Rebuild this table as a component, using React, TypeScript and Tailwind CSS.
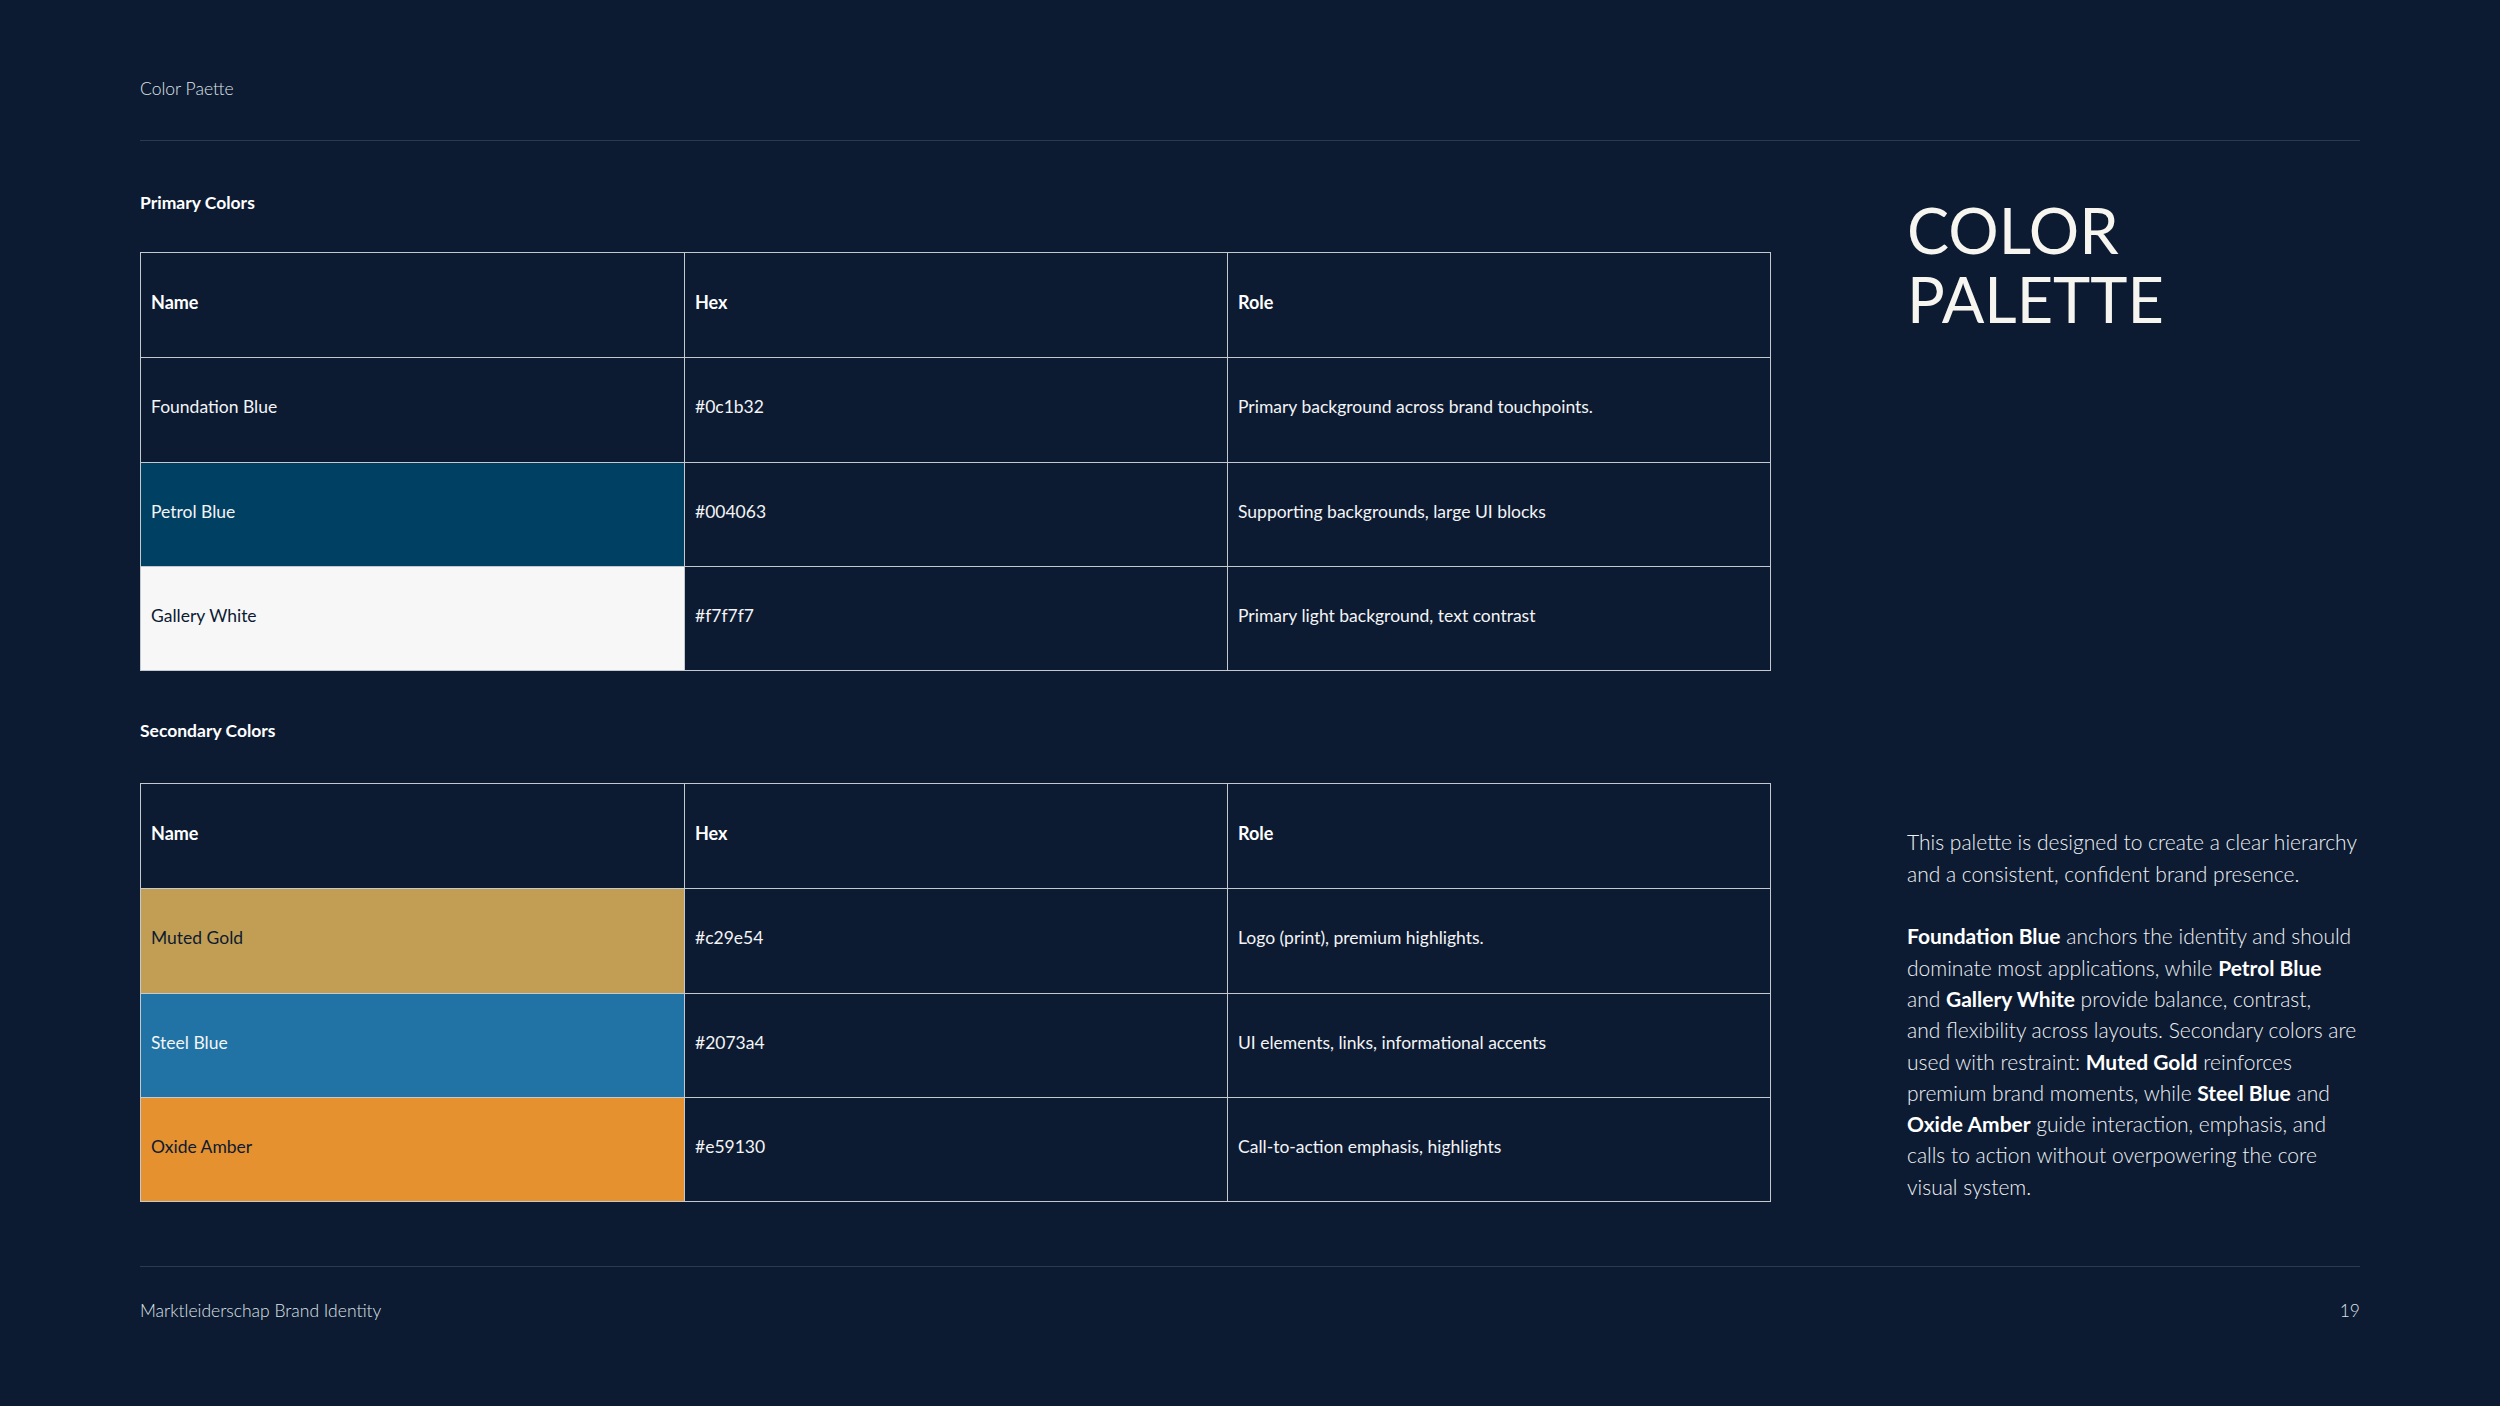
import React from "react"

type Swatch = {
  name: string
  hex: string
  role: string
  cell: string
}

const primary: Swatch[] = [
  { name: "Foundation Blue", hex: "#0c1b32", role: "Primary background across brand touchpoints.", cell: "bg-[#0c1b32] text-[#f3f4f6]" },
  { name: "Petrol Blue", hex: "#004063", role: "Supporting backgrounds, large UI blocks", cell: "bg-[#004063] text-[#f3f4f6]" },
  { name: "Gallery White", hex: "#f7f7f7", role: "Primary light background, text contrast", cell: "bg-[#f7f7f7] text-[#0c1b32]" },
]

const secondary: Swatch[] = [
  { name: "Muted Gold", hex: "#c29e54", role: "Logo (print), premium highlights.", cell: "bg-[#c29e54] text-[#0c1b32]" },
  { name: "Steel Blue", hex: "#2073a4", role: "UI elements, links, informational accents", cell: "bg-[#2073a4] text-[#f3f4f6]" },
  { name: "Oxide Amber", hex: "#e59130", role: "Call-to-action emphasis, highlights", cell: "bg-[#e59130] text-[#0c1b32]" },
]

const ColorTable = ({ rows }: { rows: Swatch[] }) => (
  <div className="border border-[#c4c8cf] text-[17.5px]">
    {/* Header */}
    <div className="grid grid-cols-3 h-[104.25px] text-[18px] font-bold text-white">
      <div className="flex items-center px-[10px] pb-[6px]">Name</div>
      <div className="flex items-center px-[10px] pb-[6px] border-l border-[#c4c8cf]">Hex</div>
      <div className="flex items-center px-[10px] pb-[6px] border-l border-[#c4c8cf]">Role</div>
    </div>
    {rows.map((row) => (
      <div key={row.name} className="grid grid-cols-3 h-[104.25px] border-t border-[#c4c8cf]">
        <div className={`flex items-center px-[10px] pb-[5px] ${row.cell}`}>{row.name}</div>
        <div className="flex items-center px-[10px] pb-[5px] text-[#f3f4f6] border-l border-[#c4c8cf]">{row.hex}</div>
        <div className="flex items-center px-[10px] pb-[5px] text-[#f3f4f6] border-l border-[#c4c8cf]">{row.role}</div>
      </div>
    ))}
  </div>
)

const B = ({ children }: { children: React.ReactNode }) => (
  <span className="font-bold text-white">{children}</span>
)

export default function App() {
  return (
    <div className="w-[2500px] h-[1406px] bg-[#0c1b32] px-[140px] pt-[77px] font-['Lato',sans-serif] text-[#eef0f3]">
      {/* Top header */}
      <div className="text-[17.5px] leading-[24px] font-light text-[#dfe2e7]">Color Paette</div>
      <div className="mt-[39px] h-px bg-[#2b3a51]" />

      {/* Main content */}
      <div className="mt-[50px] flex gap-[136px]">
        <div className="w-[1631px] flex flex-col">
          <h3 className="text-[17.5px] leading-[24px] font-bold text-white">Primary Colors</h3>
          <div className="mt-[37px]">
            <ColorTable rows={primary} />
          </div>
          <h3 className="mt-[48px] text-[17.5px] leading-[24px] font-bold text-white">Secondary Colors</h3>
          <div className="mt-[40px]">
            <ColorTable rows={secondary} />
          </div>
        </div>

        <div className="flex-1 flex flex-col justify-between">
          <h1 className="mt-[4px] text-[63px] leading-[69px] font-normal text-[#f7f5f0]">
            COLOR
            <br />
            PALETTE
          </h1>
          <div className="text-[21px] leading-[31.3px] font-light text-[#f0f2f5] whitespace-nowrap">
            <p>
              This palette is designed to create a clear hierarchy
              <br />
              and a consistent, confident brand presence.
            </p>
            <p className="mt-[31.3px]">
              <B>Foundation Blue</B> anchors the identity and should
              <br />
              dominate most applications, while <B>Petrol Blue</B>
              <br />
              and <B>Gallery White</B> provide balance, contrast,
              <br />
              and flexibility across layouts. Secondary colors are
              <br />
              used with restraint: <B>Muted Gold</B> reinforces
              <br />
              premium brand moments, while <B>Steel Blue</B> and
              <br />
              <B>Oxide Amber</B> guide interaction, emphasis, and
              <br />
              calls to action without overpowering the core
              <br />
              visual system.
            </p>
          </div>
        </div>
      </div>

      {/* Footer */}
      <div className="mt-[64px] h-px bg-[#2b3a51]" />
      <div className="mt-[32px] flex justify-between text-[17.5px] leading-[24px] font-light text-[#dfe2e7]">
        <span>Marktleiderschap Brand Identity</span>
        <span>19</span>
      </div>
    </div>
  )
}
